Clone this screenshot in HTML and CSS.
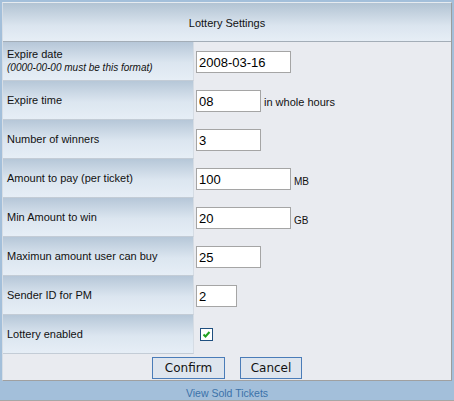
FILE: index.html
```html
<!DOCTYPE html>
<html>
<head>
<meta charset="utf-8">
<link rel="stylesheet" href="styles.css">
</head>
<body>
<div class="panel">
  <div class="header">Lottery Settings</div>
  <div class="rows">
    <div class="row">
      <div class="label two">Expire date<span class="hint">(0000-00-00 must be this format)</span></div>
      <div class="value"><input class="inp w95" value="2008-03-16"></div>
    </div>
    <div class="row">
      <div class="label">Expire time</div>
      <div class="value"><input class="inp w65" value="08"><span class="unit">in whole hours</span></div>
    </div>
    <div class="row">
      <div class="label">Number of winners</div>
      <div class="value"><input class="inp w65" value="3"></div>
    </div>
    <div class="row">
      <div class="label">Amount to pay (per ticket)</div>
      <div class="value"><input class="inp w95" value="100"><span class="unit small">MB</span></div>
    </div>
    <div class="row">
      <div class="label">Min Amount to win</div>
      <div class="value"><input class="inp w95" value="20"><span class="unit small">GB</span></div>
    </div>
    <div class="row">
      <div class="label">Maximun amount user can buy</div>
      <div class="value"><input class="inp w65" value="25"></div>
    </div>
    <div class="row">
      <div class="label">Sender ID for PM</div>
      <div class="value"><input class="inp w41" value="2"></div>
    </div>
    <div class="row">
      <div class="label">Lottery enabled</div>
      <div class="value"><span class="check"><svg width="11" height="11" viewBox="0 0 11 11"><path d="M2.5 5.5 L4.5 7.5 L8.5 3" fill="none" stroke="#21a121" stroke-width="2"/></svg></span></div>
    </div>
  </div>
  <div class="actions">
    <button class="btn confirm">Confirm</button>
    <button class="btn cancel">Cancel</button>
  </div>
</div>
<div class="footer"><a href="#" class="link">View Sold Tickets</a></div>
</body>
</html>
```
FILE: styles.css
```css
html, body {
  margin: 0;
  padding: 0;
}
body {
  background: #a3bfda;
  font-family: "Liberation Sans", Arial, sans-serif;
  width: 454px;
  height: 401px;
  overflow: hidden;
  border-bottom: 1px solid #a6a6a6;
  box-sizing: border-box;
}
.panel {
  margin: 2px 2px 0 2px;
  width: 450px;
  box-sizing: border-box;
  border: 1px solid;
  border-color: #e6ebf0 #9c9c9c #a0a0a0 #d6dde5;
  background: #e9ebf0;
}
.header {
  height: 39px;
  border-bottom: 1px solid #a3adb7;
  background: linear-gradient(#b2c3d3, #dbe5ef 60%, #e6eef6);
  display: flex;
  align-items: center;
  justify-content: center;
  font-size: 11px;
  color: #111;
  padding-top: 1px;
  box-sizing: border-box;
}
.row {
  display: flex;
  height: 39px;
}
.label {
  width: 186px;
  height: 38px;
  border-bottom: 1px solid #c3ccd6;
  border-right: 1px solid #d5dce4;
  background: linear-gradient(#b6c7d8, #dce6f0 55%, #e6eef6);
  font-size: 11px;
  color: #111;
  padding-left: 4px;
  display: flex;
  flex-direction: column;
  justify-content: center;
  box-sizing: content-box;
}
.label.two {
  line-height: 14px;
}
.hint {
  font-style: italic;
  font-size: 10px;
}
.value {
  flex: 1;
  display: flex;
  align-items: center;
  padding-left: 2px;
}
.inp {
  height: 22px;
  box-sizing: border-box;
  border: 1px solid #a5a5a5;
  background: #fff;
  font-family: "Liberation Sans", Arial, sans-serif;
  font-size: 13px;
  color: #000;
  padding: 1px 2px 0 2px;
  margin: 0;
  outline: none;
}
.w95 { width: 95px; }
.w65 { width: 65px; }
.w41 { width: 41px; }
.unit {
  font-size: 11px;
  margin-left: 3px;
  color: #111;
  padding-top: 2px;
}
.unit.small {
  font-size: 10px;
  padding-top: 6px;
}
.check {
  width: 13px;
  height: 13px;
  box-sizing: border-box;
  border: 1px solid #1f4f7f;
  background: #fff;
  margin-left: 4px;
  display: flex;
  align-items: center;
  justify-content: center;
}
.check svg { display: block; }
.actions {
  display: flex;
  justify-content: center;
  gap: 15px;
  padding: 3px 0 1px 0;
  height: 26px;
  box-sizing: border-box;
}
.btn {
  height: 22px;
  box-sizing: border-box;
  border: 1px solid #4a7cb8;
  background: #dee5ee;
  font-family: "DejaVu Sans", sans-serif;
  font-size: 12px;
  color: #111;
  padding: 0;
  margin: 0;
}
.confirm { width: 73px; }
.cancel { width: 62px; }
.footer {
  text-align: center;
  padding-top: 6px;
  font-size: 10.5px;
}
.link {
  color: #3b72a9;
  text-decoration: none;
}
```
